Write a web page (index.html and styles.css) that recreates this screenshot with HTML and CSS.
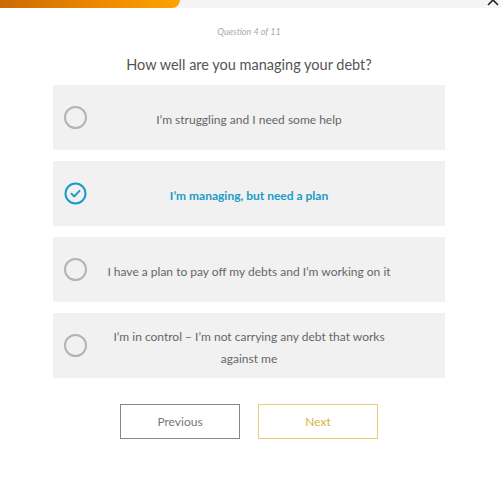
FILE: index.html
```html
<!DOCTYPE html>
<html lang="en">
<head>
    <meta charset="UTF-8">
    <meta name="viewport" content="width=device-width, initial-scale=1.0">
    <title>Debt Quiz</title>
    <link rel="stylesheet" href="styles.css">
</head>
<body>
    <div class="progress">
        <div class="progress-fill"></div>
        <button class="close" aria-label="Close">
            <svg width="14" height="14" viewBox="0 0 14 14"><path d="M2 2 L12 12 M12 2 L2 12" stroke="#222" stroke-width="1.6" fill="none"/></svg>
        </button>
    </div>

    <div class="quiz">
        <p class="counter">Question 4 of 11</p>
        <h1 class="question">How well are you managing your debt?</h1>

        <div class="options">
            <div class="option">
                <span class="radio"></span>
                <span class="label">I’m struggling and I need some help</span>
            </div>
            <div class="option selected">
                <span class="radio">
                    <svg width="23" height="23" viewBox="0 0 23 23"><circle cx="11.5" cy="11.5" r="10" stroke="#1b9bc6" stroke-width="2" fill="none"/><path d="M7.5 11.8 L10.3 14.4 L15.5 8.9" stroke="#1b9bc6" stroke-width="2" fill="none" stroke-linecap="round" stroke-linejoin="round"/></svg>
                </span>
                <span class="label">I’m managing, but need a plan</span>
            </div>
            <div class="option">
                <span class="radio"></span>
                <span class="label">I have a plan to pay off my debts and I’m working on it</span>
            </div>
            <div class="option">
                <span class="radio"></span>
                <span class="label">I’m in control – I’m not carrying any debt that works against me</span>
            </div>
        </div>

        <div class="nav">
            <button class="btn btn-prev">Previous</button>
            <button class="btn btn-next">Next</button>
        </div>
    </div>
</body>
</html>
```

FILE: styles.css
```css
body {
    font-family: Lato, "Open Sans", sans-serif;
    background-color: #fff;
    color: #666;
    margin: 0;
    padding: 0;
}
.progress {
    position: relative;
    height: 8px;
    background-color: #f4f4f4;
}
.progress-fill {
    width: 180px;
    height: 8px;
    border-radius: 0 0 8px 0;
    background: linear-gradient(to right, #c96a06, #f08c00 60%, #fba400);
}
.close {
    position: absolute;
    right: 0;
    top: -7px;
    padding: 0;
    border: none;
    background: none;
}
.quiz {
    width: 392px;
    margin: 0 55px 0 53px;
    text-align: center;
}
.counter {
    margin: 18px 0 0;
    font-size: 9px;
    font-style: italic;
    color: #aaa;
    line-height: 12px;
}
.question {
    margin: 17px 0 0;
    font-size: 14.5px;
    font-weight: normal;
    color: #555;
    line-height: 20px;
}
.options {
    display: flex;
    flex-direction: column;
    gap: 11px;
    margin-top: 10px;
}
.option {
    position: relative;
    height: 65px;
    box-sizing: border-box;
    display: flex;
    align-items: center;
    justify-content: center;
    background-color: #f1f1f1;
    padding: 4px 48px 0;
}
.radio {
    position: absolute;
    left: 11px;
    top: 21px;
    width: 19px;
    height: 19px;
    border: 2px solid #b3b3b3;
    border-radius: 50%;
}
.selected .radio {
    border: none;
    width: 23px;
    height: 23px;
}
.label {
    font-size: 12px;
    line-height: 22px;
    color: #666;
}
.selected .label {
    color: #1b9bc6;
    font-weight: bold;
}
.nav {
    display: flex;
    justify-content: center;
    gap: 18px;
    margin-top: 26px;
}
.btn {
    width: 120px;
    height: 35px;
    font-family: Lato, sans-serif;
    font-size: 12px;
    background: #fff;
    cursor: pointer;
}
.btn-prev {
    border: 1px solid #888;
    color: #777;
}
.btn-next {
    border: 1px solid #e6cf77;
    color: #d6b43e;
}
```
